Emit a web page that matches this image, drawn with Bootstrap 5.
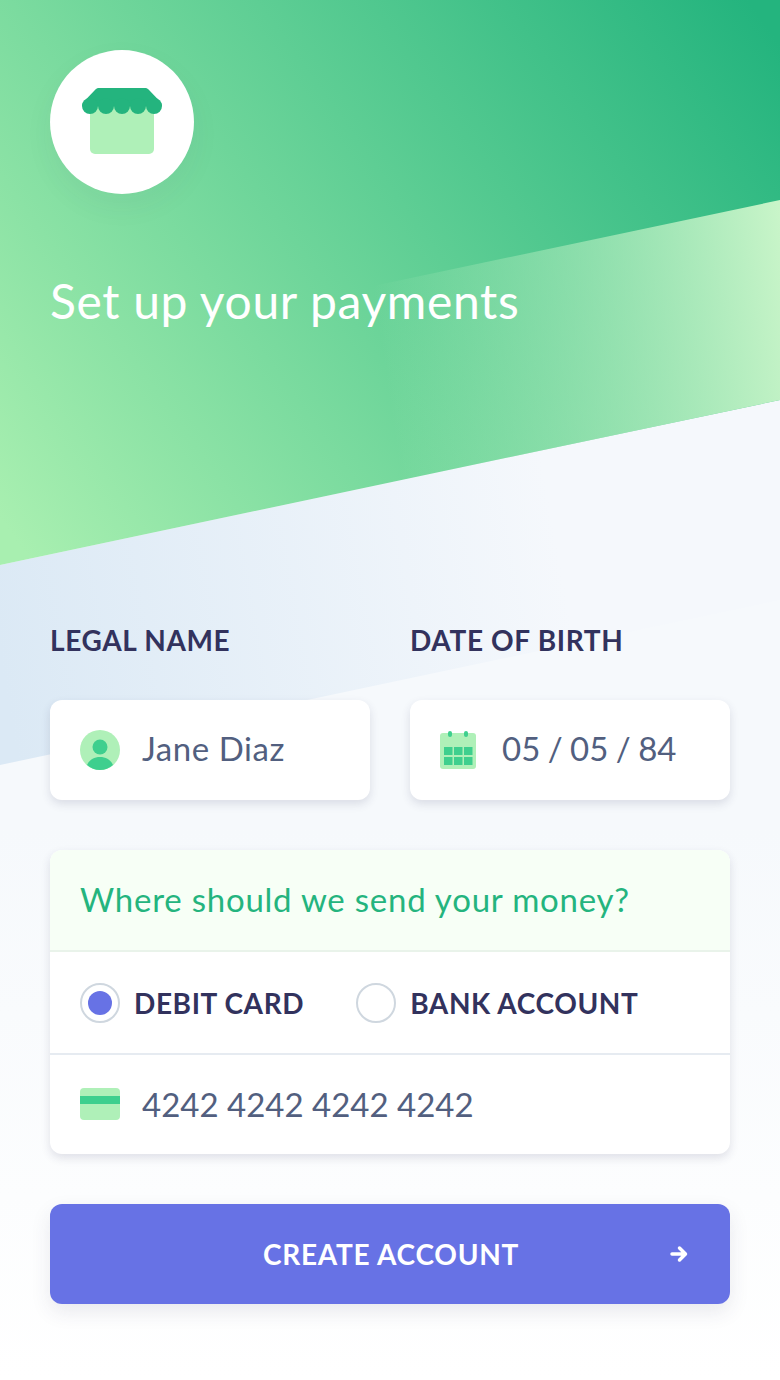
<!DOCTYPE html>
<html lang="en">
<head>
  <meta charset="UTF-8" />
  <meta name="viewport" content="width=device-width, initial-scale=1.0"/>
  <title>Set up your payments</title>
  <link href="https://cdn.jsdelivr.net/npm/bootstrap@5.3.2/dist/css/bootstrap.min.css" rel="stylesheet">
  <style>
    body {
      font-family: Lato, "Noto Sans", sans-serif;
      background: #fff;
      min-height: 1380px;
    }
    .pay-page {
      width: 780px;
      height: 1380px;
      padding: 50px;
      overflow: hidden;
    }
    .pay-backdrop {
      top: 0;
      left: 0;
    }
    .pay-content {
      z-index: 1;
    }
    .shop-badge {
      width: 144px;
      height: 144px;
      padding-bottom: 2px;
      box-shadow: 0 12px 30px rgba(50, 50, 93, .05);
    }
    .pay-title {
      color: #fff;
      font-size: 48px;
      font-weight: 400;
      line-height: 56px;
      margin: 79px 0 0;
      letter-spacing: .65px;
    }
    .field-heading {
      color: #32325d;
      font-size: 28px;
      font-weight: 700;
      line-height: 36px;
      letter-spacing: .65px;
      margin: 0;
    }
    .heading-row {
      margin-top: 293px;
      margin-bottom: 42px;
      gap: 40px;
    }
    .field-col {
      width: 320px;
    }
    .field-pair {
      gap: 40px;
    }
    .field-box {
      width: 320px;
      height: 100px;
      padding: 0 30px;
      gap: 22px;
      border-radius: 12px;
      box-shadow: 0 4px 10px rgba(50, 50, 93, .14);
    }
    .date-box {
      gap: 26px;
    }
    .field-text {
      color: #525f7f;
      font-size: 33px;
      line-height: 38px;
      letter-spacing: .55px;
    }
    .date-box .field-text {
      letter-spacing: 0;
      word-spacing: -1px;
    }
    .money-card {
      margin-top: 50px;
      border: 0;
      border-radius: 12px;
      box-shadow: 0 4px 10px rgba(50, 50, 93, .14);
      overflow: hidden;
    }
    .money-head {
      height: 102px;
      padding: 0 30px;
      background: #f7fff6;
      border-bottom: 2px solid #e9f3ea;
      color: #24b47e;
      font-size: 33px;
      letter-spacing: .77px;
    }
    .money-row {
      height: 101px;
      padding: 0 30px;
    }
    .money-row + .money-row {
      height: 101px;
      padding-bottom: 2px;
      border-top: 2px solid #e6ebf1;
    }
    .radio-ring {
      width: 40px;
      height: 40px;
      border: 2px solid #cfd7df;
    }
    .radio-ring + .radio-label {
      margin-left: 14px;
    }
    .radio-label + .radio-ring {
      margin-left: 52px;
    }
    .radio-label {
      color: #32325d;
      font-size: 28px;
      font-weight: 700;
      letter-spacing: .6px;
    }
    .radio-dot {
      width: 24px;
      height: 24px;
      background: #6772e5;
    }
    .number-icon {
      margin-right: 22px;
    }
    .number-row .field-text {
      letter-spacing: 0;
    }
    .btn-create {
      margin-top: 50px;
      width: 680px;
      height: 100px;
      padding: 0 40px 0 42px;
      background: #6772e5;
      border: 0;
      border-radius: 12px;
      color: #fff;
      font-size: 28px;
      font-weight: 700;
      letter-spacing: .75px;
      box-shadow: 0 8px 20px rgba(50, 50, 93, .1);
    }
    .btn-create:hover {
      background: #5a67d8;
      color: #fff;
    }
    .btn-arrow {
      right: 42px;
      top: 41px;
    }
  </style>
</head>
<body class="m-0">

  <div class="pay-page position-relative">
    <!-- page background -->
    <svg class="pay-backdrop position-absolute" width="780" height="1380" viewBox="0 0 780 1380">
      <defs>
        <linearGradient id="pageBg" x1="0" y1="0" x2="0" y2="1">
          <stop offset="0" stop-color="#f6f9fc"/>
          <stop offset=".6" stop-color="#f6f9fc"/>
          <stop offset="1" stop-color="#ffffff"/>
        </linearGradient>
        <linearGradient id="bandBlue" gradientUnits="userSpaceOnUse" x1="0" y1="660" x2="560" y2="560">
          <stop offset="0" stop-color="#dbe9f5"/>
          <stop offset="1" stop-color="#f5f8fc"/>
        </linearGradient>
        <linearGradient id="heroGreen" gradientUnits="userSpaceOnUse" x1="30" y1="560" x2="770" y2="30">
          <stop offset="0" stop-color="#a8efb0"/>
          <stop offset="1" stop-color="#24b47e"/>
        </linearGradient>
        <linearGradient id="bandLight" gradientUnits="userSpaceOnUse" x1="380" y1="340" x2="790" y2="280">
          <stop offset="0" stop-color="#c9f5c9" stop-opacity="0"/>
          <stop offset="1" stop-color="#c9f5c9"/>
        </linearGradient>
      </defs>
      <rect width="780" height="1380" fill="url(#pageBg)"/>
      <polygon points="0,565 780,400 780,600 0,765" fill="url(#bandBlue)"/>
      <polygon points="0,0 780,0 780,400 0,565" fill="url(#heroGreen)"/>
      <polygon points="0,365 780,200 780,400 0,565" fill="url(#bandLight)"/>
    </svg>

    <div class="pay-content position-relative">
      <div class="shop-badge rounded-circle bg-white d-flex align-items-center justify-content-center">
        <svg width="80" height="66" viewBox="0 0 80 66">
          <rect x="8" y="16" width="64" height="50" rx="5" fill="#aff0b8"/>
          <g fill="#24b47e">
            <path d="M17 0h46c1.500 0 2.800.6 3.800 1.800L78.500 14c1 1.300 1.500 2.600 1.500 4H0c0-1.400.5-2.700 1.500-4L13.200 1.800C14.200.6 15.500 0 17 0z"/>
            <circle cx="8" cy="18" r="8"/>
            <circle cx="24" cy="18" r="8"/>
            <circle cx="40" cy="18" r="8"/>
            <circle cx="56" cy="18" r="8"/>
            <circle cx="72" cy="18" r="8"/>
          </g>
        </svg>
      </div>

      <h1 class="pay-title">Set up your payments</h1>

      <div class="heading-row d-flex">
        <div class="field-col"><p class="field-heading">LEGAL NAME</p></div>
        <div class="field-col"><p class="field-heading">DATE OF BIRTH</p></div>
      </div>

      <div class="d-flex field-pair">
        <div class="field-box bg-white d-flex align-items-center">
          <svg width="40" height="40" viewBox="0 0 40 40">
            <circle cx="20" cy="20" r="20" fill="#aff0b8"/>
            <circle cx="20" cy="17" r="7.500" fill="#3ecf8e"/>
            <path d="M7 35C9.500 29.500 14 27 20 27s10.500 2.500 13 8A20 20 0 0 1 20 40a20 20 0 0 1-13-5z" fill="#3ecf8e"/>
          </svg>
          <span class="field-text pb-1">Jane Diaz</span>
        </div>
        <div class="field-box date-box bg-white d-flex align-items-center">
          <svg width="36" height="38" viewBox="0 0 36 38">
            <rect x="0" y="2" width="36" height="36" rx="3" fill="#aff0b8"/>
            <rect x="8" y="0" width="4" height="6" rx="2" fill="#3ecf8e"/>
            <rect x="24" y="0" width="4" height="6" rx="2" fill="#3ecf8e"/>
            <g fill="#3ecf8e">
              <rect x="4" y="16" width="8.500" height="8"/><rect x="14" y="16" width="8.500" height="8"/><rect x="24" y="16" width="8.500" height="8"/>
              <rect x="4" y="26" width="8.500" height="8"/><rect x="14" y="26" width="8.500" height="8"/><rect x="24" y="26" width="8.500" height="8"/>
            </g>
          </svg>
          <span class="field-text pb-1">05 / 05 / 84</span>
        </div>
      </div>

      <div class="card money-card">
        <div class="money-head d-flex align-items-center">Where should we send your money?</div>
        <div class="money-row d-flex align-items-center">
          <span class="radio-ring rounded-circle d-flex align-items-center justify-content-center"><span class="radio-dot rounded-circle"></span></span>
          <span class="radio-label">DEBIT CARD</span>
          <span class="radio-ring rounded-circle"></span>
          <span class="radio-label">BANK ACCOUNT</span>
        </div>
        <div class="money-row number-row d-flex align-items-center">
          <svg class="number-icon" width="40" height="32" viewBox="0 0 40 32">
            <rect width="40" height="32" rx="4" fill="#aff0b8"/>
            <rect y="8" width="40" height="8" fill="#3ecf8e"/>
          </svg>
          <span class="field-text">4242 4242 4242 4242</span>
        </div>
      </div>

      <button type="button" class="btn btn-create position-relative d-block">
        CREATE ACCOUNT
        <svg class="btn-arrow position-absolute" width="18" height="18" viewBox="0 0 18 18">
          <path d="M2 9h13M9.500 3l6 6-6 6" fill="none" stroke="#fff" stroke-width="3.500" stroke-linecap="round" stroke-linejoin="round"/>
        </svg>
      </button>
    </div>
  </div>

  <script src="https://cdn.jsdelivr.net/npm/bootstrap@5.3.2/dist/js/bootstrap.bundle.min.js"></script>
</body>
</html>
